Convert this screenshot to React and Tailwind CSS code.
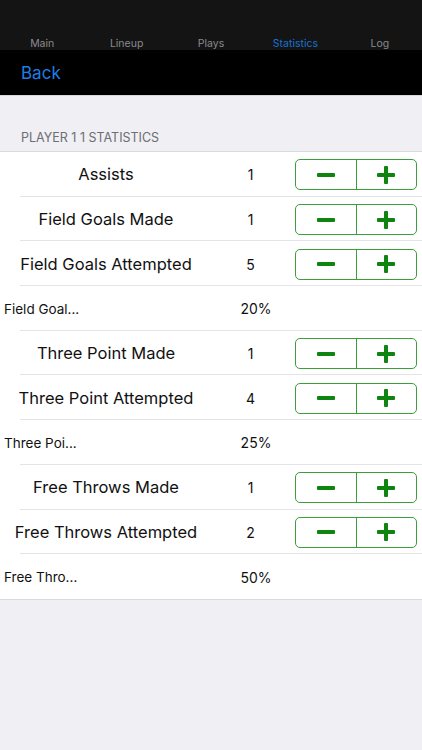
import React from "react";

const rows = [
  { label: "Assists", value: "1", stepper: true },
  { label: "Field Goals Made", value: "1", stepper: true },
  { label: "Field Goals Attempted", value: "5", stepper: true },
  { label: "Field Goal...", value: "20%", stepper: false },
  { label: "Three Point Made", value: "1", stepper: true },
  { label: "Three Point Attempted", value: "4", stepper: true },
  { label: "Three Poi...", value: "25%", stepper: false },
  { label: "Free Throws Made", value: "1", stepper: true },
  { label: "Free Throws Attempted", value: "2", stepper: true },
  { label: "Free Thro...", value: "50%", stepper: false },
];

function Stepper() {
  return (
    <div className="flex h-[31px] w-[122px] rounded-[5px] border border-[#3a9e3a] overflow-hidden">
      <div className="flex flex-1 items-center justify-center border-r border-[#3a9e3a]">
        <div className="h-[4px] w-[18px] rounded-[1px] bg-[#0d850f]" />
      </div>
      <div className="flex flex-1 items-center justify-center">
        <div className="relative h-[18px] w-[18px]">
          <div className="absolute left-0 top-[7px] h-[4px] w-[18px] rounded-[1px] bg-[#0d850f]" />
          <div className="absolute left-[7px] top-0 h-[18px] w-[4px] rounded-[1px] bg-[#0d850f]" />
        </div>
      </div>
    </div>
  );
}

export default function App() {
  const tabs = ["Main", "Lineup", "Plays", "Statistics", "Log"];
  return (
    <div
      className="min-h-[750px] w-[422px] bg-[#efeff4]"
      style={{ fontFamily: "Inter, 'Liberation Sans', sans-serif" }}
    >
      <div className="flex h-[50px] items-end bg-[#141414]">
        {tabs.map((t) => (
          <div
            key={t}
            className={`flex-1 text-center text-[10.5px] leading-[12px] ${
              t === "Statistics" ? "text-[#1a73d1]" : "text-[#8a8a8e]"
            }`}
          >
            {t}
          </div>
        ))}
      </div>
      <div className="flex h-[46px] items-center bg-black pl-[21px] pt-[3px] border-b border-[#d8d8dc]">
        <span className="text-[17px] text-[#1c7ee6]">Back</span>
      </div>
      <div className="px-[21px] pt-[34px] pb-[5px] text-[12.5px] leading-[16px] text-[#6d6d72]">
        PLAYER 1 1 STATISTICS
      </div>
      <div className="border-t border-b border-[#d9d9de] bg-white">
        {rows.map((r, i) => (
          <div key={i} className="flex h-[44.7px] flex-col">
            <div className="flex flex-1 items-center pt-[2px]">
              {r.stepper ? (
                <div className="w-[212px] text-center text-[16.5px] text-[#111]">{r.label}</div>
              ) : (
                <div className="w-[212px] pl-[4px] text-[13.5px] text-[#111]">{r.label}</div>
              )}
              {r.stepper ? (
                <div className="w-[77px] text-center text-[14px] text-[#111]">{r.value}</div>
              ) : (
                <div className="w-[88px] text-center text-[14px] text-[#111]">{r.value}</div>
              )}
              {r.stepper && (
                <div className="ml-[6px]">
                  <Stepper />
                </div>
              )}
            </div>
            {i < rows.length - 1 && <div className="ml-[20px] h-[1px] bg-[#e4e4e8]" />}
          </div>
        ))}
      </div>
    </div>
  );
}
